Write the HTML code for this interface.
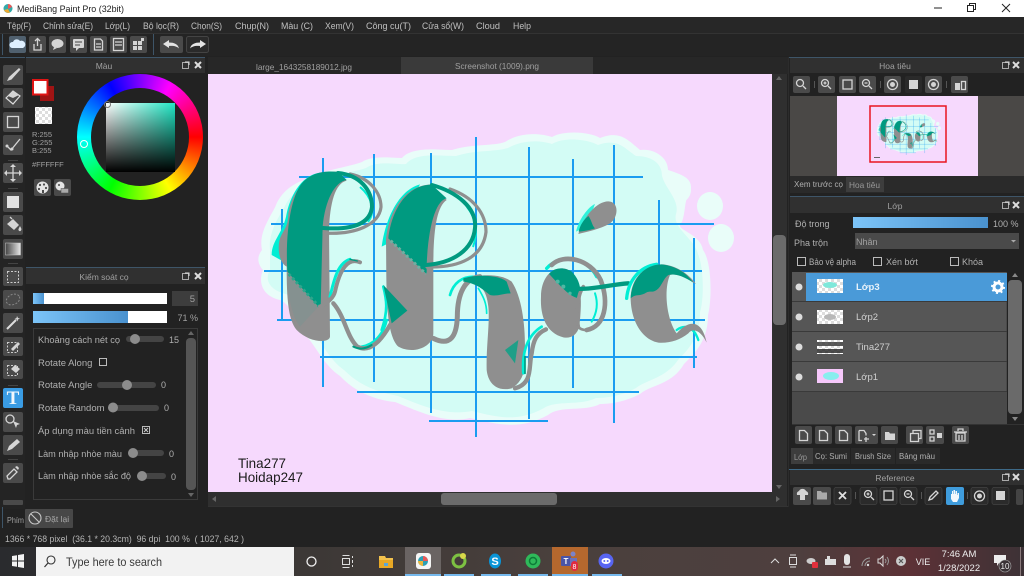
<!DOCTYPE html>
<html><head><meta charset="utf-8"><style>
html,body{margin:0;padding:0;width:1024px;height:576px;overflow:hidden;background:#222}
body{filter:blur(.3px)}
svg{position:absolute;left:0;top:0}
text{font-family:"Liberation Sans","Noto Sans CJK SC",sans-serif;font-size:9px;fill:#b0b0b0}
.m{font-size:9px;fill:#c0c0c0}
.h{text-anchor:middle;fill:#a0a0a0;font-size:8.5px}
.b{fill:#4a4a4a}
.k{fill:#2b2b2b;stroke:#444;stroke-width:.7}
.ic{fill:none;stroke:#d5d5d5;stroke-width:1.3}
.f{fill:#d5d5d5}
.g{fill:none;stroke:#8f8f8f;stroke-linecap:round;stroke-linejoin:round}
.t{fill:none;stroke:#009a80;stroke-linecap:round;stroke-linejoin:round}
.c{fill:none;stroke:#00eed4;stroke-linecap:round;stroke-linejoin:round}
#wheel{position:absolute;left:77px;top:74px;width:126px;height:126px;border-radius:50%;background:conic-gradient(from 90deg,#f00,#ff0,#0f0,#0ff,#00f,#f0f,#f00)}
#hole{position:absolute;left:14px;top:14px;width:98px;height:98px;border-radius:50%;background:#222}
#sq{position:absolute;left:29px;top:29px;width:69px;height:69px;background:linear-gradient(to bottom,transparent,#000),linear-gradient(to right,#fff,#20e6c4)}
#mk{position:absolute;left:3px;top:66px;width:6px;height:6px;border:1.5px solid #fff;border-radius:50%}
</style></head><body>
<svg width="1024" height="576" viewBox="0 0 1024 576">
<defs>
<linearGradient id="tb" x1="0" x2="1" y1="0" y2="0"><stop offset="0" stop-color="#2a2b2e"/><stop offset=".3" stop-color="#3c3836"/><stop offset=".55" stop-color="#4a403d"/><stop offset=".78" stop-color="#4e3f3e"/><stop offset=".89" stop-color="#5c3136"/><stop offset="1" stop-color="#3d3236"/></linearGradient>
<linearGradient id="bl2" x1="0" x2="1" y1="0" y2="0"><stop offset="0" stop-color="#7cc4f8"/><stop offset="1" stop-color="#4a92cf"/></linearGradient>
<linearGradient id="gr" x1="0" x2="1" y1="0" y2="0"><stop offset="0" stop-color="#444"/><stop offset="1" stop-color="#e8e8e8"/></linearGradient>
<pattern id="chk" width="6" height="6" patternUnits="userSpaceOnUse"><rect width="6" height="6" fill="#fff"/><rect width="3" height="3" fill="#ddd"/><rect x="3" y="3" width="3" height="3" fill="#ddd"/></pattern>
</defs>
<rect width="1024" height="576" fill="#222"/>
<!-- title -->
<rect width="1024" height="17" fill="#fff"/>
<circle cx="8" cy="8.5" r="4.5" fill="#3aa"/><path d="M8 4a4.5 4.5 0 0 1 4 3L8 9z" fill="#e55"/><path d="M4 10a4.5 4.5 0 0 0 6 2.5L8 9z" fill="#ea3"/>
<text x="17" y="12" textLength="107" lengthAdjust="spacingAndGlyphs" style="font-size:9.5px;fill:#222">MediBang Paint Pro (32bit)</text>
<path d="M934 8h8" stroke="#222"/><rect x="969.5" y="3.5" width="6" height="6" fill="none" stroke="#222"/><rect x="967.5" y="5.5" width="6" height="6" fill="#fff" stroke="#222"/>
<path d="M1002 4l8 8M1010 4l-8 8" stroke="#222"/>
<!-- menu -->
<rect y="17" width="1024" height="17" fill="#272727"/>
<text class="m" x="7" y="29" textLength="24" lengthAdjust="spacingAndGlyphs">Tệp(F)</text><text class="m" x="43" y="29" textLength="50" lengthAdjust="spacingAndGlyphs">Chỉnh sửa(E)</text><text class="m" x="105" y="29" textLength="25" lengthAdjust="spacingAndGlyphs">Lớp(L)</text><text class="m" x="143" y="29" textLength="36" lengthAdjust="spacingAndGlyphs">Bộ lọc(R)</text><text class="m" x="191" y="29" textLength="31" lengthAdjust="spacingAndGlyphs">Chọn(S)</text><text class="m" x="235" y="29" textLength="34" lengthAdjust="spacingAndGlyphs">Chụp(N)</text><text class="m" x="281" y="29" textLength="32" lengthAdjust="spacingAndGlyphs">Màu (C)</text><text class="m" x="325" y="29" textLength="29" lengthAdjust="spacingAndGlyphs">Xem(V)</text><text class="m" x="366" y="29" textLength="45" lengthAdjust="spacingAndGlyphs">Công cụ(T)</text><text class="m" x="422" y="29" textLength="42" lengthAdjust="spacingAndGlyphs">Cửa sổ(W)</text><text class="m" x="476" y="29" textLength="24" lengthAdjust="spacingAndGlyphs">Cloud</text><text class="m" x="513" y="29" textLength="18" lengthAdjust="spacingAndGlyphs">Help</text>
<!-- toolbar -->
<rect y="33" width="1024" height="23" fill="#242424"/>
<rect y="33" width="1024" height="1" fill="#333"/>
<rect x="2" y="34" width="1" height="21" fill="#3e5568"/><rect x="153" y="34" width="1" height="21" fill="#3e5568"/>
<g class="b"><rect x="9" y="36" width="17" height="17" rx="2" fill="#50606e"/><rect x="29" y="36" width="17" height="17" rx="2"/><rect x="49" y="36" width="17" height="17" rx="2"/><rect x="70" y="36" width="17" height="17" rx="2"/><rect x="90" y="36" width="17" height="17" rx="2"/><rect x="110" y="36" width="17" height="17" rx="2"/><rect x="130" y="36" width="17" height="17" rx="2"/><rect x="160" y="36" width="23" height="17" rx="2"/></g>
<rect x="186.5" y="36.5" width="22" height="16" rx="2" fill="#2a2a2a" stroke="#444"/>
<path d="M12 48a3 3 0 0 1 1-6 4 4 0 0 1 7-1 3.5 3.5 0 0 1 3 7z" fill="#dff0ff"/>
<path d="M34 44v6h7v-6M37.5 46v-7M35 41l2.5-2.5 2.5 2.5" class="ic"/>
<ellipse cx="57.5" cy="43.5" rx="6" ry="4.5" class="f"/><path d="M54 47l-1 3 4-2z" class="f"/>
<rect x="73" y="39" width="11" height="9" rx="1" class="f"/><path d="M75 42h7M75 45h5" stroke="#444"/><path d="M76 48v3l3-3z" class="f"/>
<path d="M94.5 39h6l2 2v9h-8z" class="ic"/><path d="M96 44h5M96 47h5" class="ic" stroke-width=".8"/>
<rect x="113.5" y="38.5" width="10" height="12" class="ic"/><path d="M115 42h7M115 45h7" class="ic" stroke-width=".9"/>
<g class="f"><rect x="133" y="41" width="4" height="4"/><rect x="138" y="41" width="4" height="4"/><rect x="133" y="46" width="4" height="4"/><rect x="138" y="46" width="4" height="4"/><rect x="141" y="38" width="3" height="3"/></g>
<path d="M163 44l6-4v2.5c5 0 9 1.5 10 6-2-2-5-3-10-2.5V48z" fill="#e4e4e4"/>
<path d="M206 44l-6-4v2.5c-5 0-9 1.5-10 6 2-2 5-3 10-2.5V48z" fill="#e4e4e4"/>
<!-- tab bar -->
<rect x="208" y="57" width="580" height="17" fill="#272727"/>
<rect x="401" y="57" width="192" height="17" fill="#3a3a3a"/>
<text x="256" y="70" textLength="96" lengthAdjust="spacingAndGlyphs" style="font-size:8.5px;fill:#a0a0a0">large_1643258189012.jpg</text>
<text x="455" y="69" textLength="84" lengthAdjust="spacingAndGlyphs" style="font-size:8.5px;fill:#a0a0a0">Screenshot (1009).png</text>

<!-- tools -->
<rect x="0" y="57" width="25" height="452" fill="#242424"/>
<rect x="0" y="57" width="25" height="1" fill="#3e5568"/>
<g class="b"><rect x="3" y="65" width="20" height="20" rx="2"/><rect x="3" y="88" width="20" height="20" rx="2"/><rect x="3" y="112" width="20" height="20" rx="2"/><rect x="3" y="135" width="20" height="20" rx="2"/><rect x="3" y="163" width="20" height="20" rx="2"/><rect x="3" y="192" width="20" height="20" rx="2"/><rect x="3" y="215" width="20" height="20" rx="2"/><rect x="3" y="239" width="20" height="20" rx="2"/><rect x="3" y="267" width="20" height="19" rx="2"/><rect x="3" y="290" width="20" height="19" rx="2"/><rect x="3" y="313" width="20" height="20" rx="2"/><rect x="3" y="337" width="20" height="19" rx="2"/><rect x="3" y="360" width="20" height="19" rx="2"/><rect x="3" y="412" width="20" height="20" rx="2"/><rect x="3" y="435" width="20" height="20" rx="2"/><rect x="3" y="463" width="20" height="20" rx="2"/><rect x="3" y="500" width="20" height="5" rx="1"/></g>
<rect x="3" y="388" width="20" height="20" rx="2" fill="#3a9ce4"/>
<path d="M7 81l2-4 10-9 1.5 1.5-9 10z" class="f"/>
<path d="M6 98l7-7 7 5-7 8z" fill="none" stroke="#ddd" stroke-width="1.2"/><path d="M8 96l5-5 6 4-6 3z" class="f"/>
<rect x="7.5" y="116.5" width="11" height="11" class="ic" stroke="#ddd"/>
<path d="M7 146l4 4 9-11" class="ic" stroke-width="2"/><circle cx="7" cy="146" r="1.5" class="f"/><circle cx="12" cy="149" r="1.5" class="f"/>
<path d="M13 165v16M5 173h16" class="ic" stroke-width="2"/><path d="M13 164l-3 3h6zM13 182l-3-3h6zM4 173l3-3v6zM22 173l-3-3v6z" class="f"/>
<rect x="7" y="196" width="12" height="12" fill="#e2e2e2"/>
<path d="M7 224l6-5 6 6-5 5z" class="f"/><path d="M12 219l-2-2" class="ic"/><path d="M20 226c1 2 2 3 1 4.5s-3 0-2.5-1.5z" class="f"/>
<rect x="5.5" y="243" width="15" height="12" fill="url(#gr)" stroke="#ccc" stroke-width=".5"/>
<rect x="7.5" y="271.5" width="11" height="11" fill="none" stroke="#ccc" stroke-dasharray="2 1.5"/>
<ellipse cx="13" cy="299.5" rx="7" ry="5" fill="none" stroke="#888" stroke-dasharray="2 1.5" transform="rotate(-25 13 299.5)"/>
<path d="M7 329l9-9" stroke="#ddd" stroke-width="2"/><path d="M17 316l1 2 2 .5-2 1-.5 2-1-2-2-.5 2-1z" class="f"/>
<rect x="7.5" y="342.5" width="10" height="10" fill="none" stroke="#ccc" stroke-dasharray="2 1.5"/><path d="M11 349l7-7 2 2-7 7z" class="f"/>
<rect x="7.5" y="365.5" width="10" height="10" fill="none" stroke="#ccc" stroke-dasharray="2 1.5"/><path d="M11 369l4-4 5 4-4 4z" class="f"/>
<text x="13" y="404" text-anchor="middle" style="font-family:'Liberation Serif',serif;font-weight:bold;font-size:19px;fill:#f3f8fc">T</text>
<circle cx="10" cy="419" r="4" class="ic"/><path d="M13 421l7 3-3 1-1 3z" class="f"/>
<path d="M7 451l2-5 8-7 3 3-8 7z" class="f"/>
<path d="M8 479l-1-3 7-7 3 3-7 7z" class="ic"/><path d="M15 467l2-1 2 2-1 2z" class="f"/>
<g fill="#444"><rect x="8" y="160" width="10" height="1"/><rect x="8" y="188" width="10" height="1"/><rect x="8" y="263" width="10" height="1"/><rect x="8" y="385" width="10" height="1"/><rect x="8" y="459" width="10" height="1"/></g>

<!-- color panel -->
<rect x="26" y="57" width="179" height="1" fill="#3e5568"/>
<rect x="26" y="58" width="179" height="15" fill="#303030"/>
<text class="h" x="104" y="69">Màu</text>
<rect x="182.5" y="62.5" width="6" height="6" fill="none" stroke="#aaa"/><path d="M185 62h4v3" stroke="#ddd" fill="none"/>
<path d="M195 62l6 6M201 62l-6 6" stroke="#ddd" stroke-width="2"/>
<rect x="40" y="86" width="14" height="15" fill="#a01414"/>
<rect x="33" y="80" width="14.5" height="14.5" fill="#fff" stroke="#e01515" stroke-width="2"/>
<rect x="35" y="107" width="17" height="17" fill="url(#chk)"/>
<text x="32" y="137" style="font-size:7.5px;fill:#a0a0a0">R:255</text><text x="32" y="145" style="font-size:7.5px;fill:#a0a0a0">G:255</text><text x="32" y="153" style="font-size:7.5px;fill:#a0a0a0">B:255</text>
<text x="32" y="167" style="font-size:7.5px;fill:#a0a0a0">#FFFFFF</text>
<rect x="34" y="179" width="17" height="17" rx="2" class="b"/><rect x="54" y="179" width="17" height="17" rx="2" class="b"/>
<circle cx="42.5" cy="187.5" r="6" fill="#e4e4e4"/><g fill="#4a4a4a"><circle cx="40" cy="185" r="1.1"/><circle cx="44" cy="184.5" r="1.1"/><circle cx="46" cy="188" r="1.1"/><circle cx="39" cy="189" r="1.1"/><rect x="42" y="190" width="2" height="3"/></g>
<circle cx="60" cy="186" r="4.5" fill="#e4e4e4"/><circle cx="59" cy="185" r="1" fill="#4a4a4a"/><rect x="61" y="188.5" width="7.5" height="4.5" fill="#aaa" stroke="#4a4a4a" stroke-width=".5"/>

<!-- brush panel -->
<rect x="26" y="267" width="179" height="1" fill="#3e5568"/>
<rect x="26" y="268" width="179" height="16" fill="#303030"/>
<text class="h" x="104" y="280">Kiểm soát cọ</text>
<rect x="182.5" y="273.5" width="6" height="6" fill="none" stroke="#aaa"/><path d="M185 273h4v3" stroke="#ddd" fill="none"/>
<path d="M195 273l6 6M201 273l-6 6" stroke="#ddd" stroke-width="2"/>
<rect x="33" y="293" width="134" height="11" fill="#fff"/><rect x="33" y="293" width="11" height="11" fill="url(#bl2)"/>
<rect x="172" y="291" width="26" height="15" fill="#3d3d3d"/><text x="195" y="302" text-anchor="end" style="font-size:9.5px;fill:#a0a0a0">5</text>
<rect x="33" y="311" width="134" height="12" fill="#fff"/><rect x="33" y="311" width="95" height="12" fill="url(#bl2)"/>
<text x="198" y="321" text-anchor="end" style="font-size:9px;fill:#a0a0a0">71 %</text>
<rect x="33.5" y="328.5" width="164" height="171" fill="none" stroke="#3a3a3a"/>
<rect x="186" y="338" width="10" height="152" rx="4" fill="#555"/>
<path d="M191 331l-3 4h6zM191 497l-3-4h6z" fill="#666"/>
<text x="38" y="343" textLength="82" lengthAdjust="spacingAndGlyphs" style="font-size:9.5px">Khoảng cách nét cọ</text>
<rect x="126" y="336" width="38" height="6" rx="3" fill="#444"/><circle cx="135" cy="339" r="5" fill="#8c8c8c"/><text x="169" y="343">15</text>
<text x="38" y="366" style="font-size:9.5px">Rotate Along</text><rect x="99.5" y="358.5" width="7" height="7" fill="none" stroke="#bbb"/>
<text x="38" y="388" style="font-size:9.5px">Rotate Angle</text>
<rect x="97" y="382" width="59" height="6" rx="3" fill="#444"/><circle cx="127" cy="385" r="5" fill="#8c8c8c"/><text x="161" y="388">0</text>
<text x="38" y="411" style="font-size:9.5px">Rotate Random</text>
<rect x="108" y="405" width="51" height="6" rx="3" fill="#444"/><circle cx="113" cy="407.5" r="5" fill="#8c8c8c"/><text x="164" y="411">0</text>
<text x="38" y="434" textLength="97" lengthAdjust="spacingAndGlyphs" style="font-size:9.5px">Áp dụng màu tiền cảnh</text><rect x="142.5" y="426.5" width="7" height="7" fill="none" stroke="#bbb"/><path d="M144 428l4 4M148 428l-4 4" stroke="#ccc"/>
<text x="38" y="457" textLength="84" lengthAdjust="spacingAndGlyphs" style="font-size:9.5px">Làm nhập nhòe màu</text>
<rect x="128" y="450" width="36" height="6" rx="3" fill="#444"/><circle cx="133" cy="453" r="5" fill="#8c8c8c"/><text x="169" y="457">0</text>
<text x="38" y="479" textLength="93" lengthAdjust="spacingAndGlyphs" style="font-size:9.5px">Làm nhập nhòe sắc độ</text>
<rect x="137" y="473" width="29" height="6" rx="3" fill="#444"/><circle cx="142" cy="476" r="5" fill="#8c8c8c"/><text x="171" y="480">0</text>
<rect x="2" y="507" width="1" height="21" fill="#3e5568"/>
<text x="7" y="523" textLength="17" lengthAdjust="spacingAndGlyphs" style="font-size:8px;fill:#a0a0a0">Phím</text>
<rect x="25" y="509" width="48" height="19" rx="1" fill="#474747"/>
<circle cx="35" cy="518" r="6" fill="none" stroke="#c8c8c8" stroke-width="1.1"/><path d="M31 514l8 8" stroke="#c8c8c8" stroke-width="1.1"/>
<text x="45" y="522" style="font-size:8.5px;fill:#a8a8a8">Đặt lại</text>
<text x="5" y="542" textLength="239" lengthAdjust="spacingAndGlyphs" style="font-size:9px;fill:#b5b5b5" xml:space="preserve">1366 * 768 pixel  (36.1 * 20.3cm)  96 dpi  100 %  ( 1027, 642 )</text>

<!-- canvas -->
<rect x="208" y="74" width="564" height="418" fill="#f6d9fd"/>
<g id="art">
<g fill="#e9fdf9">
<path d="M262 250C258 232 272 215 276 205C282 190 298 180 312 178C322 170 345 168 362 162C372 155 395 158 402 158C412 146 440 150 452 150C470 144 495 146 505 142C520 132 540 133 552 137C565 130 590 132 600 138C620 130 628 140 640 150C652 148 668 156 668 170C680 174 695 178 690 192C684 200 686 210 682 222C672 230 700 232 703 250C712 262 712 300 708 315C708 340 696 352 684 364C672 385 650 385 640 394C625 402 610 404 600 404C585 412 560 405 548 415C520 430 500 425 470 418C445 424 420 412 395 402C375 400 355 392 340 376C325 366 318 350 308 338C298 325 292 305 280 300C262 296 258 282 263 270C256 262 258 255 262 250Z"/>
<ellipse cx="710" cy="206" rx="13" ry="14"/><ellipse cx="721" cy="238" rx="13" ry="14"/>
<circle cx="678" cy="190" r="13"/>
</g>
<path d="M270 250C268 232 280 215 284 208C290 194 302 186 316 183C328 175 348 174 366 168C378 160 398 165 406 164C416 152 440 156 456 156C474 150 495 152 508 148C522 140 540 140 552 144C565 136 590 140 598 145C618 138 624 148 636 156C650 156 662 162 662 176C666 190 680 200 676 214C672 228 694 238 698 254C704 268 704 300 700 312C700 336 690 348 678 360C666 378 646 380 636 388C622 396 606 398 596 398C580 406 556 400 544 408C518 422 500 418 472 411C446 416 422 406 398 396C378 392 360 386 344 370C330 360 322 344 314 332C304 320 298 300 286 294C270 290 264 280 270 270Z" fill="#d3fcf5"/>
<g stroke="#1a9cf0" stroke-width="2" fill="none">
<path d="M299 177H643M271 224H714M264 271H702M277 320H705M320 357H697M357 392H639M429 421H548"/>
<path d="M282 209V320M323 158V387M374 154V382M431 153V413M476 137V437M529 147V419M573 159V388M614 145V423M659 200V270M694 238V368"/>
</g>
<g transform="translate(270 150) scale(.33333)">
<!-- first l -->
<path d="M5 315C5 270 40 250 50 190C65 125 100 75 150 68L100 200L50 340Z" fill="#00eed4"/>
<path d="M80 540C55 510 50 450 50 350C30 340 20 300 30 265C40 240 55 230 55 190C70 110 120 65 200 65L230 92C195 100 180 160 177 240L180 560C178 580 120 580 80 540Z" fill="#8f8f8f"/>
<path d="M52 365C45 240 65 130 100 95C130 65 170 62 205 66L230 90C195 95 165 150 158 230L152 470L140 470Z" fill="#009a80"/>
<path d="M52 365L145 470L90 530C65 500 52 430 52 365Z" fill="#859190"/>
<path d="M56 372L148 470" stroke="#2ea58c" stroke-width="9" stroke-dasharray="8 8" fill="none"/>
<!-- k -->
<path d="M180 440C190 400 200 340 240 328" class="c" stroke-width="9"/>
<path d="M275 590C310 585 340 555 350 510" class="c" stroke-width="8"/>
<path d="M270 337C235 322 210 355 195 425C190 445 170 460 150 470" class="g" stroke-width="12"/>
<path d="M190 460C225 500 230 560 262 590C300 610 335 570 360 525" class="g" stroke-width="13"/>
<path d="M250 590C270 600 290 595 305 585" class="t" stroke-width="6"/>
<path d="M240 328L262 333" class="t" stroke-width="4"/>
<!-- second l -->
<path d="M335 290C345 210 385 120 450 103L400 200L355 280Z" fill="#00eed4"/>
<path d="M340 410C350 450 355 480 335 540" class="c" stroke-width="8"/>
<path d="M385 590C345 550 350 420 348 270C355 190 400 105 485 103L530 150C500 170 490 240 490 350L490 550C490 590 430 615 385 590Z" fill="#8f8f8f"/>
<path d="M355 265C365 180 410 105 485 104L530 145C500 150 475 220 470 345L470 372Z" fill="#009a80"/>
<path d="M340 405L412 482L365 520Z" fill="#009a80"/>
<path d="M362 272L468 372" stroke="#6fb0a2" stroke-width="9" stroke-dasharray="8 8" fill="none"/>
<!-- hump and stem -->
<path d="M540 435C550 400 575 380 610 380" class="c" stroke-width="8"/>
<path d="M490 565C540 590 560 560 562 500C562 430 585 385 630 380" class="g" stroke-width="15"/>
<path d="M600 383C650 370 700 375 725 395C755 440 765 520 765 590C768 650 765 690 725 715C685 725 655 705 650 660C648 590 660 520 655 470C650 420 630 400 600 395Z" fill="#8f8f8f"/>
<path d="M580 385C620 372 690 375 710 395L722 430C700 430 680 440 660 435C640 420 620 400 580 395Z" fill="#009a80"/>
<path d="M625 415C640 440 650 460 650 490" class="c" stroke-width="5"/>
<path d="M745 570L705 600L735 640Z" fill="#1f9f88"/>
<path d="M760 670C755 600 775 555 815 530" class="c" stroke-width="8"/>
<path d="M735 715C790 700 775 650 785 610C790 570 800 550 828 538" class="g" stroke-width="13"/>
<path d="M765 620V670" class="t" stroke-width="5"/>
<!-- o -->
<path d="M830 355C870 310 950 320 980 380" class="c" stroke-width="10"/>
<path d="M975 430C985 460 980 490 965 515" class="c" stroke-width="6"/>
<path d="M845 345C880 310 960 325 992 390C1018 460 1005 530 950 540" class="g" stroke-width="14"/>
<path d="M813 440C813 380 850 345 892 358C935 380 938 440 928 530C920 558 900 566 880 562C830 550 810 500 813 440Z" fill="#8f8f8f"/>
<path d="M837 372C855 350 885 352 905 365C925 385 935 410 930 445C900 445 865 400 837 372Z" fill="#009a80"/>
<path d="M925 530C915 485 925 430 940 410" class="g" stroke-width="11"/>
<path d="M950 540C930 540 925 530 925 530" class="g" stroke-width="8"/>
<path d="M902 415C960 422 1010 405 1075 400" class="t" stroke-width="13"/>
<circle cx="863" cy="395" r="6" fill="#4fb7a3"/><circle cx="880" cy="410" r="6" fill="#4fb7a3"/><circle cx="900" cy="430" r="5" fill="#4fb7a3"/>
<!-- accent -->
<path d="M918 245C925 210 955 170 975 162L950 230Z" fill="#2ff2da"/>
<path d="M925 252C940 200 980 154 1015 154C1048 155 1046 202 1020 220C990 238 950 245 925 252Z" fill="#8f8f8f"/>
<path d="M926 245C930 225 942 208 955 198C965 210 965 225 975 235C955 242 940 243 926 245Z" fill="#009a80"/>
<!-- c -->
<path d="M1070 445C1075 390 1110 350 1160 343" class="c" stroke-width="10"/>
<path d="M1220 540C1240 525 1270 525 1285 570" class="c" stroke-width="7"/>
<path d="M1082 450C1080 380 1130 342 1180 343C1220 348 1255 370 1278 402C1250 385 1220 368 1200 375C1180 420 1190 510 1220 550C1255 510 1295 505 1310 578C1295 545 1270 530 1255 550C1230 570 1200 580 1165 578C1120 570 1085 520 1082 450Z" fill="#8f8f8f"/>
<path d="M1082 445C1085 385 1125 343 1175 343C1220 348 1250 370 1270 398C1240 378 1215 370 1195 375C1180 385 1175 410 1160 420C1145 430 1140 420 1125 430C1105 440 1100 430 1082 445Z" fill="#009a80"/>
</g>
<!-- letter loops in absolute page coordinates -->
<path d="M360 187C372 197 376 212 368 222" fill="none" stroke="#00eed4" stroke-width="2"/>
<path d="M350 174C370 178 381 193 381 207C379 225 355 235 324 233" fill="none" stroke="#8f8f8f" stroke-width="3.2" stroke-linecap="round"/>
<path d="M338 173C360 175 372 190 372 207C370 225 350 230 323 228" fill="none" stroke="#009a80" stroke-width="4" stroke-linecap="round"/>
<path d="M467 207C475 217 479 230 473 247" fill="none" stroke="#00eed4" stroke-width="2"/>
<path d="M450 189C473 197 486 213 486 232C483 257 460 268 427 267" fill="none" stroke="#8f8f8f" stroke-width="3.2" stroke-linecap="round"/>
<path d="M432 185C457 192 477 208 475 228C473 250 453 263 426 265" fill="none" stroke="#009a80" stroke-width="4" stroke-linecap="round"/>
</g>
<text x="238" y="468" textLength="48" lengthAdjust="spacingAndGlyphs" style="font-size:14px;fill:#1b1b1b">Tina277</text>
<text x="238" y="482" textLength="65" lengthAdjust="spacingAndGlyphs" style="font-size:14px;fill:#1b1b1b">Hoidap247</text>
<!-- canvas scrollbars -->
<rect x="772" y="74" width="15" height="432" fill="#2f2f2f"/>
<rect x="208" y="492" width="564" height="14" fill="#2f2f2f"/>
<rect x="773" y="235" width="13" height="90" rx="4" fill="#6b6b6b"/>
<rect x="441" y="493" width="116" height="12" rx="3" fill="#6b6b6b"/>
<path d="M779 76l-3 4h6zM779 489l-3-4h6zM780 499l-4-3v6zM212 499l4-3v6z" fill="#666"/>
<rect x="208" y="506" width="580" height="1" fill="#333"/>

<!-- navigator -->
<rect x="788" y="57" width="236" height="1" fill="#3e5568"/>
<rect x="790" y="58" width="234" height="15" fill="#303030"/>
<text class="h" x="895" y="69">Hoa tiêu</text>
<rect x="1002.5" y="62.5" width="6" height="6" fill="none" stroke="#aaa"/><path d="M1005 62h4v3" stroke="#ddd" fill="none"/>
<path d="M1013 62l6 6M1019 62l-6 6" stroke="#ddd" stroke-width="2"/>
<g class="b"><rect x="793" y="76" width="17" height="17" rx="2"/><rect x="818" y="76" width="17" height="17" rx="2"/><rect x="839" y="76" width="17" height="17" rx="2"/><rect x="859" y="76" width="17" height="17" rx="2"/><rect x="884" y="76" width="17" height="17" rx="2"/><rect x="925" y="76" width="17" height="17" rx="2"/><rect x="951" y="76" width="17" height="17" rx="2"/></g>
<rect x="905" y="76" width="17" height="17" rx="2" fill="#2a2a2a"/>
<g class="ic">
<circle cx="800" cy="83" r="3.5"/><path d="M803 86l3 3"/>
<circle cx="825" cy="83" r="3.5"/><path d="M828 86l3 3M823.5 83h3M825 81.5v3"/>
<rect x="843" y="80" width="9" height="9"/>
<circle cx="866" cy="83" r="3.5"/><path d="M869 86l3 3M864.5 83h3"/>
<circle cx="892.5" cy="84.5" r="5"/><circle cx="933.5" cy="84.5" r="5"/>
</g>
<circle cx="892.5" cy="84.5" r="2.5" class="f"/><circle cx="933.5" cy="84.5" r="2.5" class="f"/>
<rect x="909" y="80" width="9" height="9" class="f"/>
<rect x="955" y="83" width="5" height="7" class="f"/><rect x="961.5" y="81.5" width="4" height="8" class="ic"/>
<g fill="#555"><rect x="814" y="81" width="1" height="7"/><rect x="880" y="81" width="1" height="7"/><rect x="946" y="81" width="1" height="7"/></g>
<rect x="790" y="96" width="234" height="80" fill="#4a4846"/>
<rect x="837" y="96" width="141" height="80" fill="#f6d9fd"/>
<use href="#art" transform="translate(841.9 96) scale(.135)"/>
<rect x="870" y="106" width="76" height="56" fill="none" stroke="#e81520" stroke-width="1.5"/>
<rect x="874" y="157" width="6" height="1" fill="#666"/>
<rect x="790" y="176" width="234" height="17" fill="#2a2a2a"/>
<rect x="846" y="177" width="38" height="15" fill="#3d3d3d"/>
<text x="794" y="187" textLength="49" lengthAdjust="spacingAndGlyphs" style="font-size:8.5px">Xem trước cọ</text><text x="849" y="188" textLength="31" lengthAdjust="spacingAndGlyphs" style="font-size:8.5px;fill:#999">Hoa tiêu</text>

<!-- layers -->
<rect x="790" y="196" width="234" height="1" fill="#3e5568"/>
<rect x="790" y="197" width="234" height="16" fill="#303030"/>
<text class="h" x="895" y="209">Lớp</text>
<rect x="1002.5" y="202.5" width="6" height="6" fill="none" stroke="#aaa"/><path d="M1005 202h4v3" stroke="#ddd" fill="none"/>
<path d="M1013 202l6 6M1019 202l-6 6" stroke="#ddd" stroke-width="2"/>
<text x="795" y="227">Độ trong</text>
<rect x="853" y="217" width="135" height="11" fill="url(#bl2)"/>
<text x="993" y="227">100 %</text>
<text x="794" y="246">Pha trộn</text>
<rect x="855" y="233" width="164" height="16" fill="#4a4a4a"/><text x="856" y="245" style="fill:#a0a0a0">Nhân</text>
<path d="M1011 240h5l-2.5 2.5z" fill="#aaa"/>
<rect x="797.5" y="257.5" width="8" height="8" fill="none" stroke="#bbb"/><text x="809" y="265" textLength="47" lengthAdjust="spacingAndGlyphs">Bảo vệ alpha</text>
<rect x="873.5" y="257.5" width="8" height="8" fill="none" stroke="#bbb"/><text x="886" y="265">Xén bớt</text>
<rect x="950.5" y="257.5" width="8" height="8" fill="none" stroke="#bbb"/><text x="962" y="265">Khóa</text>
<rect x="792" y="272" width="215" height="152" fill="#4a4a4a"/>
<rect x="792" y="272" width="214" height="30" fill="#565656"/><rect x="806" y="273" width="201" height="28" fill="#4a9ad8"/>
<rect x="792" y="302" width="214" height="29" fill="#565656"/><rect x="792" y="332" width="214" height="29" fill="#565656"/><rect x="792" y="362" width="214" height="29" fill="#565656"/>
<g fill="#3a3a3a"><rect x="792" y="301" width="215" height="1"/><rect x="792" y="331" width="215" height="1"/><rect x="792" y="361" width="215" height="1"/><rect x="792" y="391" width="215" height="1"/></g>
<g fill="#ddd"><circle cx="799" cy="287" r="3.5"/><circle cx="799" cy="317" r="3.5"/><circle cx="799" cy="347" r="3.5"/><circle cx="799" cy="377" r="3.5"/></g>
<rect x="817" y="279" width="26" height="14" fill="url(#chk)"/><ellipse cx="830" cy="285" rx="7" ry="3" fill="#7fe8da"/>
<rect x="817" y="310" width="26" height="14" fill="url(#chk)"/><ellipse cx="830" cy="317" rx="6" ry="3" fill="#b8b8b8"/>
<rect x="817" y="340" width="26" height="14" fill="url(#chk)"/><rect x="817" y="342" width="26" height="4" fill="#333" opacity=".8"/><rect x="817" y="349" width="26" height="4" fill="#222" opacity=".8"/>
<rect x="817" y="369" width="26" height="14" fill="#f6c8fb"/><ellipse cx="831" cy="376" rx="8" ry="4" fill="#8ee"/>
<text x="856" y="290" style="font-size:9.5px;font-weight:bold;fill:#e8f2fa">Lớp3</text>
<text x="856" y="320" style="font-size:9.5px;fill:#d0d0d0">Lớp2</text>
<text x="856" y="350" style="font-size:9.5px;fill:#d0d0d0">Tina277</text>
<text x="856" y="380" style="font-size:9.5px;fill:#d0d0d0">Lớp1</text>
<circle cx="998" cy="287" r="4" fill="none" stroke="#fff" stroke-width="3"/><circle cx="998" cy="287" r="6" fill="none" stroke="#fff" stroke-width="2" stroke-dasharray="2 2.7"/>
<rect x="1008" y="280" width="14" height="134" rx="4" fill="#6a6a6a"/>
<path d="M1015 273l-3 4h6zM1015 421l-3-4h6z" fill="#888"/>
<rect x="792" y="424" width="232" height="1" fill="#333"/>
<g class="b"><rect x="795" y="426" width="17" height="18" rx="2"/><rect x="815" y="426" width="17" height="18" rx="2"/><rect x="835" y="426" width="17" height="18" rx="2"/><rect x="855" y="426" width="23" height="18" rx="2"/><rect x="881" y="426" width="17" height="18" rx="2"/><rect x="906" y="426" width="17" height="18" rx="2"/><rect x="926" y="426" width="18" height="18" rx="2"/><rect x="952" y="426" width="17" height="18" rx="2"/></g>
<g class="ic" stroke-width="1"><path d="M799.5 430.5h5l3 3v7h-8z"/><path d="M819.5 430.5h5l3 3v7h-8z"/><path d="M839.5 430.5h5l3 3v7h-8z"/><path d="M859 430.5h5l2 3v2M859 430.5v10h3M866 437v5M864 439h5"/><path d="M910.5 433.5h8v8h-8zM913 433v-2.5h8v8h-2"/><path d="M930 430h4v4h-4zM930 437h4v4h-4z"/><path d="M956 433h9v8h-9zM954 432h13M958 431v-2h5v2M959 435v5M962 435v5"/></g>
<path d="M885 432h4l1 1.5h5v6.5h-10z" class="f"/><rect x="937" y="433" width="5" height="5" class="f"/><path d="M872 434h4l-2 2z" class="f"/>
<rect x="791" y="448" width="22" height="16" fill="#3d3d3d"/>
<rect x="813" y="448" width="37" height="16" fill="#2a2a2a"/><rect x="851" y="448" width="44" height="16" fill="#2a2a2a"/><rect x="896" y="448" width="44" height="16" fill="#2a2a2a"/>
<text x="794" y="460" textLength="13" lengthAdjust="spacingAndGlyphs" style="font-size:8.5px;fill:#999">Lớp</text><text x="815" y="459" textLength="32" lengthAdjust="spacingAndGlyphs" style="font-size:8.5px">Cọ: Sumi</text><text x="855" y="459" textLength="36" lengthAdjust="spacingAndGlyphs" style="font-size:8.5px">Brush Size</text><text x="899" y="459" textLength="36" lengthAdjust="spacingAndGlyphs" style="font-size:8.5px">Bảng màu</text>

<!-- reference -->
<rect x="788" y="469" width="236" height="1" fill="#3e6a88"/>
<rect x="790" y="470" width="234" height="15" fill="#303030"/>
<text class="h" x="895" y="481">Reference</text>
<rect x="1002.5" y="474.5" width="6" height="6" fill="none" stroke="#aaa"/><path d="M1005 474h4v3" stroke="#ddd" fill="none"/>
<path d="M1013 474l6 6M1019 474l-6 6" stroke="#ddd" stroke-width="2"/>
<rect x="793" y="487" width="18" height="18" rx="2" class="b"/><rect x="813" y="487" width="18" height="18" rx="2" class="b"/>
<rect x="834" y="487.5" width="17" height="17" rx="2" class="k"/><rect x="860" y="487.5" width="17" height="17" rx="2" class="k"/><rect x="880" y="487.5" width="17" height="17" rx="2" class="k"/><rect x="900" y="487.5" width="17" height="17" rx="2" class="k"/><rect x="925" y="487.5" width="17" height="17" rx="2" class="k"/>
<rect x="946" y="487" width="18" height="18" rx="2" fill="#3f9cdc"/>
<rect x="971" y="487.5" width="17" height="17" rx="2" class="k"/><rect x="992" y="487.5" width="17" height="17" rx="2" class="k"/>
<rect x="1016" y="489" width="7" height="16" rx="2" fill="#444"/>
<path d="M797 495a3 3 0 0 1 2-4 4 4 0 0 1 7 0 3 3 0 0 1 2 4h-3v5h-5v-5z" class="f"/>
<path d="M817 491h4l1 1.5h5v7h-10z" fill="#aaa"/>
<path d="M839 492l7 7M846 492l-7 7" stroke="#e0e0e0" stroke-width="1.8"/>
<g class="ic" stroke-width="1"><circle cx="868" cy="494" r="3.5"/><path d="M871 497l3 3M866.5 494h3M868 492.5v3"/><rect x="884" y="491" width="9" height="9"/><circle cx="908" cy="494" r="3.5"/><path d="M911 497l3 3M906.5 494h3"/><path d="M929 500l1-3 6-6 2 2-6 6z"/><circle cx="979.5" cy="496" r="5"/></g>
<path d="M951 499v-5h1v-3h1v3h.5v-4h1.5v4h.5v-3h1.5v4h.5v-2h1.5v5l-2 4h-4z" fill="#f3f8fc"/>
<circle cx="979.5" cy="496" r="2.5" class="f"/>
<rect x="996" y="491" width="9" height="9" class="f"/>
<g fill="#555"><rect x="855" y="492" width="1" height="7"/><rect x="921" y="492" width="1" height="7"/><rect x="967" y="492" width="1" height="7"/></g>
<rect x="788" y="57" width="1" height="450" fill="#2c2c2c"/>

<!-- taskbar -->
<rect y="547" width="1024" height="29" fill="url(#tb)"/>
<g fill="#f2f2f2"><path d="M12 556l5-.8v5.300h-5zM18 555l6-1v6.5h-6zM12 561.5h5v5.200l-5-.7zM18 561.5h6v6.5l-6-1z"/></g>
<rect x="36" y="547" width="258" height="29" fill="#f2f2f2"/>
<circle cx="51" cy="560" r="4" fill="none" stroke="#333" stroke-width="1.1"/><path d="M48 563l-3.5 4" stroke="#333" stroke-width="1.2"/>
<text x="66" y="566" textLength="96" lengthAdjust="spacingAndGlyphs" style="font-size:12px;fill:#3a3a3a">Type here to search</text>
<circle cx="311.5" cy="561.5" r="4.5" fill="none" stroke="#f2f2f2" stroke-width="1.3"/>
<path d="M342.5 555.5h7M342.5 567.5h7" stroke="#ddd"/><rect x="342.5" y="558.5" width="7" height="6" fill="none" stroke="#ddd"/><path d="M352.5 556v2M352.5 560v3M352.5 565v2" stroke="#ddd"/>
<path d="M379 556h6l1 2h7v10h-14z" fill="#f3c24d"/><rect x="379" y="560" width="14" height="8" fill="#e8a825"/><rect x="384" y="563" width="4" height="3" fill="#5aa6d8"/>
<rect x="405" y="547" width="36" height="29" fill="#6a6463"/>
<rect x="416" y="553" width="15" height="16" rx="3" fill="#f5f5f5"/><circle cx="423" cy="561" r="5" fill="#2a9fb5"/><path d="M423 556a5 5 0 0 1 5 5h-5z" fill="#e85656"/><path d="M418 561a5 5 0 0 0 5 5v-5z" fill="#eab53a"/>
<circle cx="459" cy="561" r="6" fill="none" stroke="#7dc142" stroke-width="3"/><circle cx="463" cy="556" r="3" fill="#d8d84a"/>
<ellipse cx="495" cy="561" rx="6" ry="7.5" fill="#0a95d8"/><text x="495" y="565" text-anchor="middle" style="font-size:11px;font-weight:bold;fill:#fff">S</text>
<circle cx="533" cy="561" r="7.5" fill="#2fb95a"/><circle cx="533" cy="561" r="3.5" fill="none" stroke="#0d7a38" stroke-width="1.5"/>
<rect x="552" y="547" width="36" height="29" fill="#b5682e"/>
<rect x="561" y="556" width="10" height="10" rx="1" fill="#4a55a8"/><text x="566" y="564" text-anchor="middle" style="font-size:8px;font-weight:bold;fill:#fff">T</text><circle cx="573" cy="554" r="2.5" fill="#7b83c9"/><rect x="570" y="558" width="7" height="8" fill="#6a72bb"/>
<rect x="571" y="561" width="7" height="10" rx="3.5" fill="#e02b3f"/><text x="574.5" y="569" text-anchor="middle" style="font-size:7px;fill:#fff">8</text>
<circle cx="606" cy="561" r="7.5" fill="#5865f2"/><ellipse cx="606" cy="561" rx="4.5" ry="3" fill="#fff"/><circle cx="604.3" cy="561" r="1" fill="#5865f2"/><circle cx="607.7" cy="561" r="1" fill="#5865f2"/>
<g fill="#76b9ed"><rect x="405" y="574" width="36" height="2"/><rect x="444" y="574" width="30" height="2"/><rect x="481" y="574" width="30" height="2"/><rect x="518" y="574" width="30" height="2"/><rect x="552" y="574" width="36" height="2"/><rect x="592" y="574" width="30" height="2"/></g>
<path d="M771 563l4-4 4 4" fill="none" stroke="#ddd"/>
<rect x="789.5" y="557.5" width="7" height="7" fill="none" stroke="#ddd"/><path d="M790 555h6M790 567h6" stroke="#ddd"/>
<ellipse cx="811" cy="561" rx="4.5" ry="3" fill="#ccc"/><rect x="812" y="562" width="6" height="6" rx="1" fill="#e0303c"/>
<rect x="825" y="559" width="11" height="6" fill="#ddd"/><rect x="827" y="556" width="3" height="3" fill="#ddd"/>
<rect x="844" y="554" width="6" height="11" rx="3" fill="#e4e4e4"/><path d="M843 567h8" stroke="#ddd"/>
<path d="M862 566a8 8 0 0 1 8-8M865 566a5 5 0 0 1 5-5" fill="none" stroke="#999"/><circle cx="868" cy="565" r="1.2" fill="#ddd"/>
<path d="M878 559h2l3-3v10l-3-3h-2z" fill="none" stroke="#ddd"/><path d="M885 559q2 2 0 4M887 557q3 4 0 8" fill="none" stroke="#999"/>
<circle cx="901" cy="561" r="5" fill="#ccc"/><path d="M899 559l4 4M903 559l-4 4" stroke="#555" stroke-width="1.2"/>
<text x="923" y="565" text-anchor="middle" style="font-size:9px;fill:#eee">VIE</text>
<text x="959" y="557" text-anchor="middle" style="font-size:9.5px;fill:#eee">7:46 AM</text>
<text x="959" y="571" text-anchor="middle" style="font-size:9.5px;fill:#eee">1/28/2022</text>
<path d="M994 555h12v8h-7l-2 3v-3h-3z" fill="#ededed"/><circle cx="1005" cy="566" r="6" fill="#3a3236" stroke="#aaa" stroke-width=".6"/><text x="1005" y="569" text-anchor="middle" style="font-size:8px;fill:#eee">10</text>
<rect x="1020" y="547" width="1" height="29" fill="#8a7a7c"/>
</svg>
<div id="wheel"><div id="hole"></div><div id="sq"><div style="position:absolute;left:-2px;top:-2px;width:5px;height:5px;border:1px solid #777;border-radius:50%"></div></div><div id="mk"></div></div>
</body></html>
